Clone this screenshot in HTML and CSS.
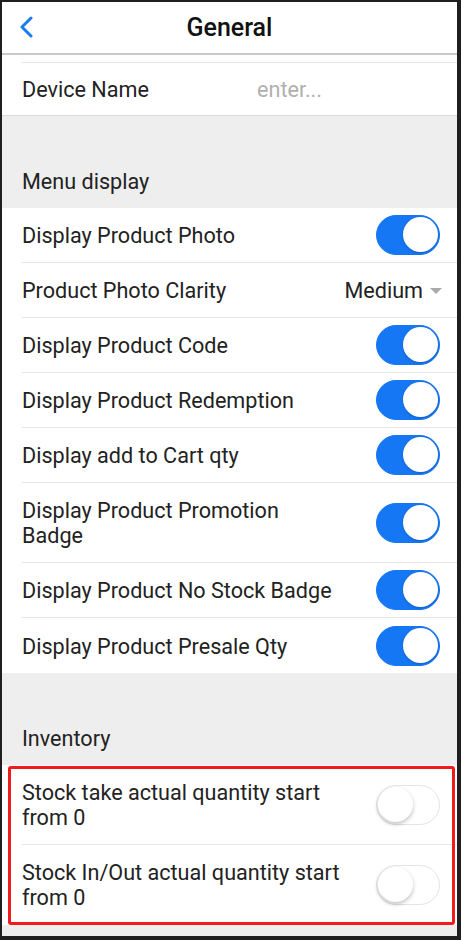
FILE: index.html
```html
<!DOCTYPE html>
<html>
<head>
    <title>General</title>
    <link rel="stylesheet" href="styles.css">
</head>
<body>
    <div class="app">
        <header class="topbar">
            <a class="back" href="#">
                <svg width="16" height="22" viewBox="0 0 16 22"><path d="M13 2 L4 11 L13 20" fill="none" stroke="#1a7cf2" stroke-width="3" stroke-linecap="round" stroke-linejoin="round"/></svg>
            </a>
            <h1>General</h1>
        </header>

        <div class="list">
            <div class="row stub"></div>
            <div class="row field">
                <label for="device_name">Device Name</label>
                <input type="text" id="device_name" placeholder="enter...">
            </div>
        </div>

        <div class="section-title">Menu display</div>
        <div class="list">
            <div class="row"><span>Display Product Photo</span><span class="switch on"></span></div>
            <div class="row"><span>Product Photo Clarity</span><span class="select">Medium<i class="caret"></i></span></div>
            <div class="row"><span>Display Product Code</span><span class="switch on"></span></div>
            <div class="row"><span>Display Product Redemption</span><span class="switch on"></span></div>
            <div class="row"><span>Display add to Cart qty</span><span class="switch on"></span></div>
            <div class="row"><span class="narrow short">Display Product Promotion Badge</span><span class="switch on"></span></div>
            <div class="row"><span>Display Product No Stock Badge</span><span class="switch on"></span></div>
            <div class="row last"><span>Display Product Presale Qty</span><span class="switch on"></span></div>
        </div>

        <div class="section-title">Inventory</div>
        <div class="list marked">
            <div class="row"><span class="narrow">Stock take actual quantity start from 0</span><span class="switch"></span></div>
            <div class="row last"><span class="narrow">Stock In/Out actual quantity start from 0</span><span class="switch"></span></div>
        </div>
    </div>
</body>
</html>
```

FILE: styles.css
```css
/* page frame */
body {
    margin: 0;
    background-color: #1f1f1f;
    font-family: Roboto, "Noto Sans", sans-serif;
    color: #222;
}

.app {
    margin: 2px 4px 0 2px;
    height: 934px;
    background-color: #eeeeee;
    overflow: hidden;
}

/* top bar */
.topbar {
    position: relative;
    height: 51px;
    background-color: #fff;
    border-bottom: 2px solid #c9c9c9;
    display: flex;
    align-items: center;
    justify-content: center;
}

.topbar h1 {
    margin: 0;
    font-size: 25px;
    font-weight: 500;
    color: #111;
}

.back {
    position: absolute;
    left: 16px;
    top: 14px;
    display: flex;
}

/* lists */
.list {
    background-color: #fff;
}

.row {
    display: flex;
    align-items: center;
    justify-content: space-between;
    min-height: 55px;
    box-sizing: border-box;
    margin-left: 20px;
    padding-right: 17px;
    border-bottom: 1px solid #e6e6e6;
    font-size: 21.6px;
    line-height: 25px;
}

.row span {
    padding: 15px 0 14px;
}

.row .narrow {
    max-width: 325px;
}

.row .short {
    max-width: 290px;
}

.row.last {
    border-bottom: none;
}

.row.stub {
    min-height: 8px;
    height: 8px;
}

.row.field {
    min-height: 53px;
    margin-left: 0;
    padding-left: 20px;
    justify-content: flex-start;
    border-bottom: 1px solid #dcdcdc;
}

.field label {
    width: 235px;
    flex-shrink: 0;
}

.field input {
    border: none;
    outline: none;
    padding: 0;
    font: inherit;
    color: #222;
    width: 150px;
}

.field input::placeholder {
    color: #b0b0b0;
}

.section-title {
    padding: 53px 20px 14px;
    font-size: 21.6px;
    line-height: 25px;
    color: #222;
}

/* dropdown */
.select {
    display: flex;
    align-items: center;
    margin-right: -2px;
}

.caret {
    margin-left: 7px;
    width: 0;
    height: 0;
    border-left: 6px solid transparent;
    border-right: 6px solid transparent;
    border-top: 6px solid #aaa;
}

/* switches */
.row span.switch {
    padding: 0;
    position: relative;
    flex-shrink: 0;
    width: 64px;
    height: 40px;
    box-sizing: border-box;
    border-radius: 20px;
    border: 1.5px solid #e4e4e4;
    background-color: #fff;
}

.switch::after {
    content: "";
    position: absolute;
    top: 1px;
    left: 1px;
    width: 35px;
    height: 35px;
    border-radius: 50%;
    background-color: #fff;
    box-shadow: 0 2px 4px rgba(0, 0, 0, 0.25);
}

.row span.switch.on {
    background-color: #1677f5;
    border-color: #1677f5;
}

.switch.on::after {
    left: auto;
    right: 1px;
    box-shadow: 0 1px 3px rgba(0, 0, 0, 0.2);
}

/* highlight box */
.marked {
    position: relative;
    height: 160px;
}

.marked::after {
    content: "";
    position: absolute;
    left: 6px;
    right: 2px;
    top: 1px;
    bottom: 0;
    border: 3px solid #f21b1b;
    border-radius: 3px;
}
```
